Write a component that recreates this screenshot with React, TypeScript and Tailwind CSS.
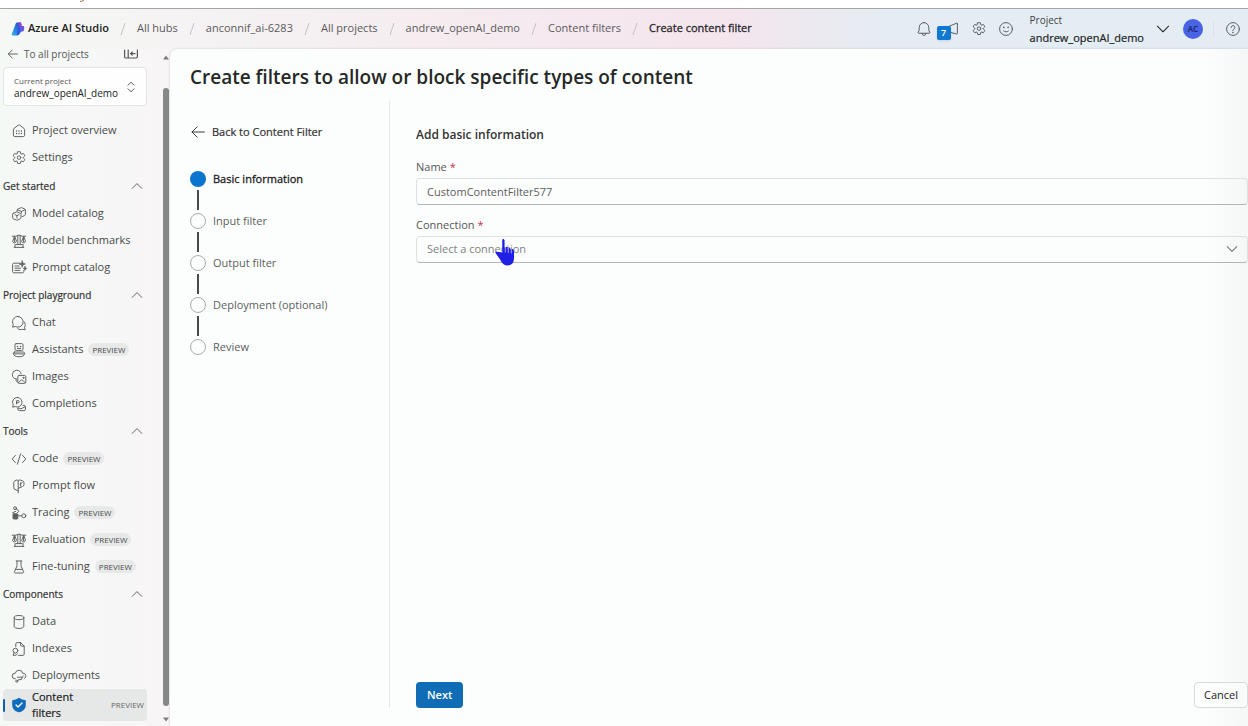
import { useState, type ReactNode } from 'react';

function Icon({ children, className = 'size-4' }: { children: ReactNode; className?: string }) {
  return (
    <svg
      viewBox="0 0 20 20"
      fill="none"
      stroke="currentColor"
      strokeWidth="1.2"
      strokeLinecap="round"
      strokeLinejoin="round"
      aria-hidden="true"
      className={`shrink-0 ${className}`}
    >
      {children}
    </svg>
  );
}

const gear = (
  <>
    <path d="M8.3 2.2a8 8 0 0 1 3.4 0l.4 2.1a1 1 0 0 0 1.4.8l2-.8a8 8 0 0 1 1.7 3l-1.6 1.4a1 1 0 0 0 0 1.6l1.6 1.4a8 8 0 0 1-1.7 3l-2-.8a1 1 0 0 0-1.4.8l-.4 2.1a8 8 0 0 1-3.4 0l-.4-2.1a1 1 0 0 0-1.4-.8l-2 .8a8 8 0 0 1-1.7-3l1.6-1.4a1 1 0 0 0 0-1.6L2.8 7.3a8 8 0 0 1 1.7-3l2 .8a1 1 0 0 0 1.4-.8z" />
    <circle cx="10" cy="9.500" r="2.200" />
  </>
);

const scales = (
  <>
    <path d="M1.500 4h4.500l4-1.500L14 4h4.500M8.500 3v11.500M11.500 3v11.500M6 14.500h8M4 18h12M5 14.500V18M15 14.500V18" />
    <path d="M4.300 4.500 2 10.500a2.400 2.400 0 0 0 4.700 0zM15.700 4.500l-2.400 6a2.400 2.400 0 0 0 4.700 0zM4.300 5v6M15.700 5v6" />
  </>
);

const icons: Record<string, ReactNode> = {
  overview: (
    <>
      <path d="M3 8.200c0-.5.2-.9.600-1.200l5.400-4.300a1.600 1.600 0 0 1 2 0L16.400 7c.4.300.6.700.6 1.200v7.300c0 .8-.7 1.500-1.500 1.500h-11A1.500 1.500 0 0 1 3 15.500z" />
      <path d="M7 10v.1M10 10v.1M13 10v.1M7 13v.1M10 13v.1M13 13v.1" strokeWidth="1.800" />
    </>
  ),
  settings: gear,
  catalog: (
    <>
      <path d="M7.500 6.500V5.200c0-.5.300-1 .8-1.200l4-1.800c.4-.2.900-.2 1.300 0L17 3.700c.6.200 1 .8 1 1.400v5.500c0 .6-.3 1.100-.9 1.300L14 13.300" />
      <path d="m8 4.800 5 2 4.600-2.200M13 6.800v2" />
      <path d="m2.800 9.200 4-1.700c.4-.2.800-.2 1.200 0l3.700 1.700c.5.200.8.600.8 1.200v4.300c0 .5-.3 1-.8 1.200L8 17.600c-.4.200-.8.200-1.200 0l-4-1.700A1.300 1.300 0 0 1 2 14.700v-4.300c0-.6.300-1 .8-1.200zM5 10.800l2.400 1.200 2.500-1.200M7.400 12v3" />
    </>
  ),
  scales,
  prompt: (
    <>
      <path d="M11 4H3.500C2.700 4 2 4.700 2 5.500v9c0 .8.700 1.500 1.500 1.500h11c.8 0 1.500-.7 1.500-1.500V13M5 7.500h5M5 10.200h7M5 13h6" />
      <path d="m14 1 1 3 3 1-3 1-1 3-1-3-3-1 3-1zM17.500 8l.6 1.900 1.700.6-1.700.6-.6 1.900-.6-1.900-1.700-.6 1.700-.6z" fill="currentColor" strokeWidth=".8" />
    </>
  ),
  chat: (
    <>
      <path d="M8.500 1.800a6.700 6.700 0 1 1-3.200 12.600L2 15.200l.8-3.300A6.700 6.700 0 0 1 8.500 1.800z" />
      <path d="M8.500 17.200c1.600 1.200 4 1.500 5.800.6l3.400.7-.8-3.200c1.500-2.300 1.100-5-.4-6.800" />
    </>
  ),
  assistants: (
    <>
      <rect x="5" y="2" width="10" height="8.500" rx="1.500" />
      <path d="M8 5.500v.2M12 5.500v.2" strokeWidth="1.900" />
      <path d="M8 8h4M4.500 12.500h11c.8 0 1.500.7 1.500 1.500v.5c0 2.200-2.800 4-7 4s-7-1.800-7-4V14c0-.8.700-1.500 1.500-1.500zM3.500 14.800h13" />
    </>
  ),
  images: (
    <>
      <path d="M6.500 12.500A5.500 5.500 0 1 1 12.600 6" />
      <rect x="8.500" y="8" width="10" height="10" rx="1.800" />
      <path d="m9.500 17 3.200-3.200c.5-.5 1.200-.5 1.700 0l3.200 3.200" />
      <circle cx="15.500" cy="11" r=".7" />
      <path d="M6.500 12.500v1.800c0 .9.400 1.500 1.200 2" />
    </>
  ),
  completions: (
    <>
      <path d="M8 1.800a6 6 0 1 1-2.800 11.400L2 14l.8-3A6 6 0 0 1 8 1.800z" />
      <path d="M7 10V5.800h2a1.300 1.300 0 0 1 0 2.600H7M8.500 15.500v1c0 1 .8 1.800 1.800 1.800h6c1 0 1.800-.8 1.800-1.800v-3c0-1-.8-1.800-1.800-1.800H15M9 15l3.500 1 5.200-2.500" />
    </>
  ),
  code: <path d="M5.500 5.500 1.500 10l4 4.500M14.500 5.500l4 4.500-4 4.500M12 3.500l-4 13" />,
  flow: (
    <>
      <path d="M9 16 5 14.300c-.9-.2-1.500-.8-1.500-1.800V5.700c0-1 .5-1.700 1.500-2.200l2.200-1C8.200 2.300 9 3 9 4" />
      <path d="M9 18.500V4.200C9 3 10 2.200 11.200 2.500l3.300 1c1 .3 1.700 1.200 1.700 2.300v2.400c0 1.200-.7 2-1.800 2.500L9 13M12 6v4M14 5.500 11.500 8" />
    </>
  ),
  tracing: (
    <>
      <circle cx="5" cy="4" r="1.800" />
      <circle cx="16" cy="13.500" r="2.500" />
      <path d="M6.500 5 9 6.500c1 .6 1 1.500.2 2.200L7.500 10M9 13.500h4.500M2 9.500l4-1.500" />
      <rect x="2.500" y="11" width="6" height="6.500" rx="1" fill="currentColor" />
    </>
  ),
  flask: <path d="M6.500 2.500h7M7.500 2.500v6L4.300 16a1 1 0 0 0 .9 1.500h9.600a1 1 0 0 0 .9-1.500l-3.200-7.500v-6M6 13h8" />,
  data: (
    <>
      <ellipse cx="10" cy="4.500" rx="6" ry="2.600" />
      <path d="M4 4.500v11c0 1.400 2.700 2.600 6 2.600s6-1.200 6-2.600v-11" />
    </>
  ),
  indexes: (
    <>
      <path d="M6 7V3.500C6 2.700 6.700 2 7.500 2H12l4.500 4.500v10c0 .8-.7 1.500-1.500 1.500H9.500M12 2v3.500c0 .6.400 1 1 1h3.500" />
      <circle cx="5.500" cy="12" r="3" />
      <path d="m4 14.500-1.500 3.300h4L8 16" />
    </>
  ),
  deploy: (
    <>
      <path d="M5.500 13.500H5a3.500 3.500 0 0 1 0-7h.4a4.700 4.700 0 0 1 9.200 0h.4a3.500 3.500 0 0 1 1.500 6.700" />
      <path d="M8 11.500h6l1.500-1.500M14 11.500l-1 3H9.500l-1.500 3" />
      <circle cx="7" cy="16.500" r="1.200" />
    </>
  ),
};

function ShieldIcon() {
  return (
    <svg viewBox="0 0 20 20" className="size-4 shrink-0" aria-hidden="true">
      <path d="M9.400 1.300a1 1 0 0 1 1.200 0c2.200 1.600 4.300 2.400 6.900 2.600.5 0 1 .5 1 1v5c0 4.500-2.700 7.400-8.100 9.300-.3.100-.5.100-.8 0-5.400-1.900-8.100-4.800-8.100-9.300v-5c0-.5.500-1 1-1 2.600-.2 4.700-1 6.900-2.600z" fill="#0f6cbd" />
      <path d="m6.300 10 2.500 2.500 5-5" fill="none" stroke="#fff" strokeWidth="1.600" strokeLinecap="round" strokeLinejoin="round" />
    </svg>
  );
}

function StudioLogo() {
  return (
    <svg viewBox="0 0 24 24" className="size-[14px] shrink-0" aria-hidden="true">
      <defs>
        <linearGradient id="logo-left" x1="0" y1="1" x2="1" y2="0">
          <stop offset="0" stopColor="#2fb4f4" />
          <stop offset="1" stopColor="#2a3fc0" />
        </linearGradient>
        <linearGradient id="logo-right" x1="0" y1="0" x2="0" y2="1">
          <stop offset="0" stopColor="#a63ad0" />
          <stop offset="1" stopColor="#4b63e8" />
        </linearGradient>
      </defs>
      <path d="M8 3c.5-1.200 1.500-2 3-2h6v12c0 6-3 10-7 10H3c-1.500 0-2.200-1.200-1.700-2.600z" fill="url(#logo-left)" />
      <path d="M13 1h3c1 0 1.800.7 2 1.800L18.800 7H21c1 0 1.600.7 1.600 1.600V12c0 3-2 4.500-4.600 4.500h-4.500z" fill="url(#logo-right)" />
      <path d="M15.500 7.500h-3L10 23c4 0 5.500-3.500 5.500-8z" fill="#2b5be0" />
    </svg>
  );
}

type Item = { label: string; icon: string; preview?: boolean };
type Group = { title: string; items: Item[] };

const topItems: Item[] = [
  { label: 'Project overview', icon: 'overview' },
  { label: 'Settings', icon: 'settings' },
];

const groups: Group[] = [
  {
    title: 'Get started',
    items: [
      { label: 'Model catalog', icon: 'catalog' },
      { label: 'Model benchmarks', icon: 'scales' },
      { label: 'Prompt catalog', icon: 'prompt' },
    ],
  },
  {
    title: 'Project playground',
    items: [
      { label: 'Chat', icon: 'chat' },
      { label: 'Assistants', icon: 'assistants', preview: true },
      { label: 'Images', icon: 'images' },
      { label: 'Completions', icon: 'completions' },
    ],
  },
  {
    title: 'Tools',
    items: [
      { label: 'Code', icon: 'code', preview: true },
      { label: 'Prompt flow', icon: 'flow' },
      { label: 'Tracing', icon: 'tracing', preview: true },
      { label: 'Evaluation', icon: 'scales', preview: true },
      { label: 'Fine-tuning', icon: 'flask', preview: true },
    ],
  },
  {
    title: 'Components',
    items: [
      { label: 'Data', icon: 'data' },
      { label: 'Indexes', icon: 'indexes' },
      { label: 'Deployments', icon: 'deploy' },
    ],
  },
];

function NavItem({ item }: { item: Item }) {
  return (
    <li>
      <a href="#" className="flex h-[27px] items-center gap-[5px] pl-2 text-[11px] text-[#484a49]">
        <Icon className="size-4 text-[#5c5e5d]">{icons[item.icon]}</Icon>
        <span className="whitespace-nowrap">{item.label}</span>
        {item.preview && (
          <span className="rounded-full bg-[#e7e9e8] px-1 text-[8px] leading-[13px] text-[#4c4c4c]">PREVIEW</span>
        )}
      </a>
    </li>
  );
}

function Sidebar() {
  return (
    <aside className="flex shrink-0 bg-linear-to-r from-[#f5f9f6] to-[#f8f5f7]">
      <div className="flex w-[162px] flex-col pr-[15px] pl-[3px]">
        <div className="flex h-[10px] shrink-0 items-center justify-between pr-2 pl-1 text-[#555]">
          <a href="#" className="flex items-center gap-[5px] text-[10px] leading-3">
            <Icon className="size-3">
              <path d="M17.500 10h-15M8.500 3.500 2 10l6.500 6.500" strokeWidth="1.500" />
            </Icon>
            To all projects
          </a>
          <button type="button" aria-label="Collapse navigation">
            <Icon className="size-4">
              <path d="M2 5v8.500c0 .8.700 1.500 1.500 1.500h13c.8 0 1.500-.7 1.500-1.500V5M6.500 5v10M15 9.500H9.500M11.500 7.500l-2 2 2 2" strokeWidth="1.500" />
            </Icon>
          </button>
        </div>
        <button
          type="button"
          className="mt-2 flex h-[39px] shrink-0 items-center justify-between rounded border border-[#e1e4e2] bg-[#fdfefd] pr-[9px] pl-[10px] text-left"
        >
          <span className="flex flex-col">
            <span className="text-[8px] leading-[13px] text-[#555]">Current project</span>
            <span className="text-[10px] leading-[13px] text-[#222]">andrew_openAI_demo</span>
          </span>
          <Icon className="size-3 text-[#444]">
            <path d="m5 7 5-5 5 5M5 13l5 5 5-5" strokeWidth="1.500" />
          </Icon>
        </button>
        <nav aria-label="Project" className="pt-[11px]">
          <ul className="pb-px">
            {topItems.map((item) => (
              <NavItem key={item.label} item={item} />
            ))}
          </ul>
          {groups.map((group) => (
            <section key={group.title}>
              <button
                type="button"
                className="flex h-7 w-full items-center justify-between pr-1 text-[10px] text-[#333] [-webkit-text-stroke:0.2px]"
              >
                {group.title}
                <Icon className="size-3 text-[#555]">
                  <path d="m2 14 8-8 8 8" strokeWidth="1.500" />
                </Icon>
              </button>
              <ul>
                {group.items.map((item) => (
                  <NavItem key={item.label} item={item} />
                ))}
              </ul>
            </section>
          ))}
          <a
            href="#"
            aria-current="page"
            className="flex items-center gap-[5px] rounded bg-[#e6e8e8] pr-[3px] text-[11px] leading-4 text-[#222] [-webkit-text-stroke:0.2px]"
          >
            <span className="flex items-center gap-[6px]">
              <span className="h-[13px] w-[2px] rounded-full bg-[#0f5fb0]" />
              <ShieldIcon />
            </span>
            <span className="min-w-0 flex-1">
              Content
              <br />
              filters
            </span>
            <span className="text-[8px] text-[#666] [-webkit-text-stroke:0]">PREVIEW</span>
          </a>
        </nav>
      </div>
      <div className="flex w-2 flex-col items-center pt-[6px] pb-1" aria-hidden="true">
        <svg viewBox="0 0 6 4" className="h-[5px] w-[6px]">
          <path d="M3 0 6 4H0z" fill="#7d7f7e" />
        </svg>
        <div className="mt-7 mb-[11px] w-[6px] flex-1 rounded-full bg-[#868887]" />
        <svg viewBox="0 0 6 4" className="h-[5px] w-[6px]">
          <path d="M3 4 0 0h6z" fill="#7d7f7e" />
        </svg>
      </div>
    </aside>
  );
}

const crumbs = [
  'All hubs',
  'anconnif_ai-6283',
  'All projects',
  'andrew_openAI_demo',
  'Content filters',
  'Create content filter',
];

function Header() {
  return (
    <header className="flex h-[41px] shrink-0 items-center border-t border-[#a4a4a8] bg-linear-to-r from-[#f5f8f5] via-[#f5e5ed] via-58% to-[#e3edf3] to-72% pr-[7px] pb-px pl-[11px]">
      <nav aria-label="Breadcrumb" className="flex flex-1 items-center text-[11px] whitespace-nowrap text-[#5a5a5c]">
        <a href="#" className="flex items-center gap-[3px] font-semibold text-[#222]">
          <StudioLogo />
          Azure AI Studio
        </a>
        {crumbs.map((crumb, index) => (
          <span key={crumb} className="flex items-center">
            <svg viewBox="0 0 6 14" className="mx-[11px] h-[14px] w-[6px]" aria-hidden="true">
              <path d="M5 1 1 13" stroke="#c5c3c6" strokeWidth="1" />
            </svg>
            <a
              href="#"
              aria-current={index === crumbs.length - 1 ? 'page' : undefined}
              className={index === crumbs.length - 1 ? 'text-[#28282c] [-webkit-text-stroke:0.3px]' : ''}
            >
              {crumb}
            </a>
          </span>
        ))}
      </nav>
      <div className="flex items-center text-[#555a5e]">
        <button type="button" aria-label="Notifications" className="mr-[11px]">
          <Icon>
            <path d="M10 2a6 6 0 0 0-6 6v3.500L2.700 14.200c-.2.500.1 1.100.7 1.100h13.200c.6 0 .9-.6.7-1.100L16 11.500V8a6 6 0 0 0-6-6zM7.500 15.500a2.500 2.500 0 0 0 5 0" />
          </Icon>
        </button>
        <button type="button" aria-label="Announcements, 7 new" className="relative mr-3">
          <Icon>
            <path d="M18 3.500v12c0 .6-.5 1-1 .8L3 12.500c-.6-.2-1-.7-1-1.300v-1.400c0-.6.4-1.100 1-1.300l14-5.800c.5-.2 1 .2 1 .8z" />
          </Icon>
          <span className="absolute top-[5px] -left-[6px] flex size-[14px] items-center justify-center rounded-xs bg-[#0f78d0] text-[9px] font-semibold text-white shadow-sm">
            7
          </span>
        </button>
        <button type="button" aria-label="Settings" className="mr-[11px]">
          <Icon>{gear}</Icon>
        </button>
        <button type="button" aria-label="Feedback" className="mr-4">
          <Icon>
            <circle cx="10" cy="10" r="8" />
            <path d="M7.300 8v.2M12.700 8v.2" strokeWidth="2" />
            <path d="M7 12.500c1.700 1.500 4.300 1.500 6 0" />
          </Icon>
        </button>
        <button type="button" className="flex items-center text-left">
          <span className="flex flex-col">
            <span className="text-[10px] leading-[17px] text-[#444]">Project</span>
            <span className="text-[11px] leading-[17px] text-[#222] [-webkit-text-stroke:0.2px]">andrew_openAI_demo</span>
          </span>
          <Icon className="ml-3 size-[14px] text-[#222]">
            <path d="m2 6 8 8 8-8" strokeWidth="1.500" />
          </Icon>
        </button>
        <button
          type="button"
          aria-label="Account"
          className="ml-[13px] flex size-5 items-center justify-center rounded-full bg-[#4863e4] text-[8px] font-semibold text-[#16225c]"
        >
          AC
        </button>
        <span className="ml-[10px] h-4 w-px bg-[#dbe3e9]" />
        <button type="button" aria-label="Help" className="ml-[11px]">
          <Icon>
            <circle cx="10" cy="10" r="8" />
            <path d="M7.700 8a2.300 2.300 0 1 1 3.500 2c-.8.500-1.200.9-1.200 1.900" />
            <path d="M10 14.200v.1" strokeWidth="1.800" />
          </Icon>
        </button>
      </div>
    </header>
  );
}

const steps = ['Basic information', 'Input filter', 'Output filter', 'Deployment (optional)', 'Review'];

function Steps() {
  return (
    <ol className="mt-[31px] text-[11px] text-[#5c5e5d]">
      {steps.map((step, index) => (
        <li key={step}>
          {index > 0 && <div className="mt-[3px] mb-[3px] ml-[7px] h-5 w-[2px] bg-[#4a4a4a]" />}
          <div className="flex h-4 items-center gap-[7px]" aria-current={index === 0 ? 'step' : undefined}>
            {index === 0 ? (
              <span className="size-4 rounded-full bg-[#0b74ce]" />
            ) : (
              <span className="size-4 rounded-full border border-[#a9abaa]" />
            )}
            <span className={index === 0 ? 'text-[#222] [-webkit-text-stroke:0.3px]' : ''}>{step}</span>
          </div>
        </li>
      ))}
    </ol>
  );
}

function PointerCursor() {
  return (
    <svg viewBox="0 0 22 28" className="pointer-events-none absolute top-1 left-[78px] h-7 w-[22px]" aria-hidden="true">
      <path
        d="M8.500 1v12.500l-5.800-.7c-1-.1-1.700.7-1 1.500L6.500 21c.5 1 .8 2 1.800 3 1.200 1.500 2.700 2.500 5 2.500 4.500 0 6.700-3 6.700-7.500v-7.500l-2.500-.8-3-1-4-.8V1z"
        fill="#1f1fe6"
      />
      <path d="M9.300 0v12M12.500 8v5M15.500 9v4.500M18.300 10v4" stroke="#1f1fe6" strokeWidth="1.600" />
      <path d="M11.300 8.500v5M14.300 9.500v4.500M17.300 10.500v4" stroke="#dcdcff" strokeWidth=".7" />
    </svg>
  );
}

function BasicForm() {
  const [name, setName] = useState('CustomContentFilter577');
  const [connection, setConnection] = useState('');
  const field =
    'h-[27px] w-full appearance-none rounded border border-[#dfe1e0] border-b-[#b4b6b5] bg-transparent px-[10px] text-[11px] leading-4 outline-none';
  return (
    <form className="flex min-w-0 flex-1 flex-col pl-[26px]" onSubmit={(event) => event.preventDefault()}>
      <h2 className="mt-[26px] text-[12px] leading-4 font-semibold text-[#333]">Add basic information</h2>
      <label htmlFor="name" className="mt-4 text-[11px] leading-4 text-[#555]">
        Name <span className="text-[#c4314b]">*</span>
      </label>
      <input
        id="name"
        value={name}
        onChange={(event) => setName(event.target.value)}
        className={`mt-[3px] text-[#5c5c5c] ${field}`}
      />
      <label htmlFor="connection" className="mt-3 text-[11px] leading-4 text-[#555]">
        Connection <span className="text-[#c4314b]">*</span>
      </label>
      <div className="relative mt-[2px]">
        <select
          id="connection"
          value={connection}
          onChange={(event) => setConnection(event.target.value)}
          className={`text-[#808281] ${field}`}
        >
          <option value="">Select a connection</option>
        </select>
        <Icon className="pointer-events-none absolute top-2 right-[10px] size-3 text-[#777]">
          <path d="m2 6 8 8 8-8" strokeWidth="1.700" />
        </Icon>
        <PointerCursor />
      </div>
      <div className="mt-auto flex justify-between">
        <button type="submit" className="h-[26px] rounded bg-[#0f6cb5] px-[11px] text-[11px] font-semibold text-white">
          Next
        </button>
        <button type="button" className="h-[26px] rounded border border-[#d9dbda] bg-white/40 px-[9px] text-[11px] text-[#222]">
          Cancel
        </button>
      </div>
    </form>
  );
}

export default function App() {
  return (
    <div className="flex h-screen flex-col overflow-hidden bg-[#f7f7f7] font-['Open_Sans','Noto_Sans',sans-serif]">
      <div className="h-2 shrink-0 bg-white pl-20">
        <svg viewBox="0 0 5 2" className="h-[2px] w-[5px]" aria-hidden="true">
          <path d="M0 1.300h2L4 0" fill="none" stroke="#9a6a48" />
        </svg>
      </div>
      <Header />
      <div className="flex min-h-0 flex-1">
        <Sidebar />
        <main className="flex min-w-0 flex-1 flex-col rounded-tl-lg bg-[#fcfefd] bg-linear-to-r from-[#fcfefd] from-96% to-[#f5f7f6] pb-[18px] pl-5 shadow-[0_0_3px_rgba(0,0,0,0.15)]">
          <h1 className="mt-4 text-[19px] leading-6 font-semibold text-[#262827]">
            Create filters to allow or block specific types of content
          </h1>
          <div className="mt-3 flex min-h-0 flex-1">
            <div className="w-[200px] shrink-0 border-r border-[#e4e6e5]">
              <a href="#" className="mt-[23px] flex items-center gap-[6px] text-[11px] leading-4 text-[#333] [-webkit-text-stroke:0.2px]">
                <Icon>
                  <path d="M18 10H2.500M9 3.500 2.500 10 9 16.500" />
                </Icon>
                Back to Content Filter
              </a>
              <Steps />
            </div>
            <BasicForm />
          </div>
        </main>
      </div>
    </div>
  );
}
